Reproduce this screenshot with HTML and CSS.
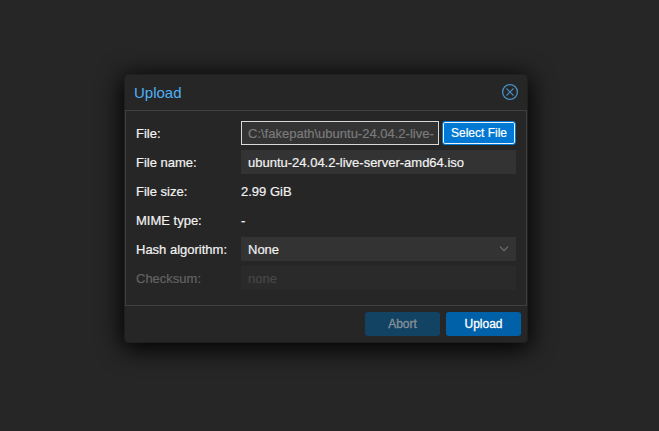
FILE: index.html
```html
<!DOCTYPE html>
<html lang="en">
<head>
<meta charset="utf-8">
<title>Upload</title>
<link rel="stylesheet" href="styles.css">
</head>
<body>
<div class="window" role="dialog" aria-labelledby="title">
  <header class="header">
    <h1 class="title" id="title">Upload</h1>
    <svg class="close" width="18" height="18" viewBox="0 0 18 18" fill="none" stroke="#4590c2">
      <circle cx="9" cy="9" r="7.4" stroke-width="1.3"/>
      <path d="M5.5 5.5l7 7M12.5 5.5l-7 7" stroke-width="1.1"/>
    </svg>
  </header>
  <main class="body">
    <div class="row">
      <span class="label">File:</span>
      <div class="file">
        <div class="field path">C:\fakepath\ubuntu-24.04.2-live-</div>
        <button class="select">Select File</button>
      </div>
    </div>
    <div class="row"><span class="label">File name:</span><div class="field">ubuntu-24.04.2-live-server-amd64.iso</div></div>
    <div class="row"><span class="label">File size:</span><div class="value">2.99 GiB</div></div>
    <div class="row"><span class="label">MIME type:</span><div class="value">-</div></div>
    <div class="row"><span class="label">Hash algorithm:</span>
      <div class="field combo">None
        <svg class="arrow" width="10" height="6" viewBox="0 0 10 6" fill="none" stroke="#707070" stroke-width="1.2"><path d="M1 .7l4 4 4-4"/></svg>
      </div>
    </div>
    <div class="row disabled"><span class="label">Checksum:</span><div class="field">none</div></div>
  </main>
  <footer class="footer">
    <button class="button muted">Abort</button>
    <button class="button">Upload</button>
  </footer>
</div>
</body>
</html>
```
FILE: styles.css
```css
* { box-sizing: border-box; }
body {
  margin: 0;
  height: 431px;
  padding: 74px 0 0 124px;
  background: #262626;
  color: #f2f2f2;
  font: 13px/24px "Liberation Sans", Arial, sans-serif;
  overflow: hidden;
}
.window {
  width: 404px;
  height: 269px;
  display: flex;
  flex-direction: column;
  border: 1px solid #1f1f1f;
  border-radius: 4px;
  background: #262626;
  box-shadow: 0 4px 24px 2px #000;
}
.header {
  height: 35px;
  padding: 0 8px 0 9px;
  display: flex;
  align-items: center;
  justify-content: space-between;
}
.title {
  margin: 1px 0 0;
  font-size: 15px;
  font-weight: 400;
  color: #4fb0f5;
}
.close { margin-bottom: 2px; }
.body {
  height: 196px;
  padding: 10px;
  border: 1px solid #404040;
  display: flex;
  flex-direction: column;
  gap: 5px;
}
.row {
  display: flex;
  height: 24px;
  line-height: 26px;
  white-space: nowrap;
  -webkit-text-stroke: .2px;
}
.label { width: 105px; flex: none; }
.field {
  flex: 1;
  min-width: 0;
  height: 24px;
  padding: 0 7px;
  background: #333;
}
.file { flex: 1; min-width: 0; display: flex; gap: 3px; }
.path {
  padding: 0 4px 0 6px;
  border: 1px solid #d9d9d9;
  line-height: 24px;
  color: #7b7b7b;
}
.select {
  width: 74px;
  height: 24px;
  padding: 0;
  border: 1px solid #0078d4;
  border-radius: 3px;
  background: #0078d4;
  box-shadow: inset 0 0 0 1px #e8f4fc;
  color: #fff;
  font: 12px/22px "Liberation Sans", Arial, sans-serif;
}
.combo { display: flex; justify-content: space-between; }
.arrow { margin-top: 9px; }
.disabled .label { color: #636363; }
.disabled .field { background: #2a2a2a; color: #484848; }
.footer {
  flex: 1;
  display: flex;
  justify-content: flex-end;
  gap: 6px;
  padding: 6px 6px 0 0;
}
.button {
  width: 75px;
  height: 24px;
  padding: 0;
  border: 0;
  border-radius: 3px;
  background: #0060a8;
  color: #fff;
  font: 12px/24px "Liberation Sans", Arial, sans-serif;
  -webkit-text-stroke: .3px;
}
.muted { background: #134362; color: #87919a; }
```
